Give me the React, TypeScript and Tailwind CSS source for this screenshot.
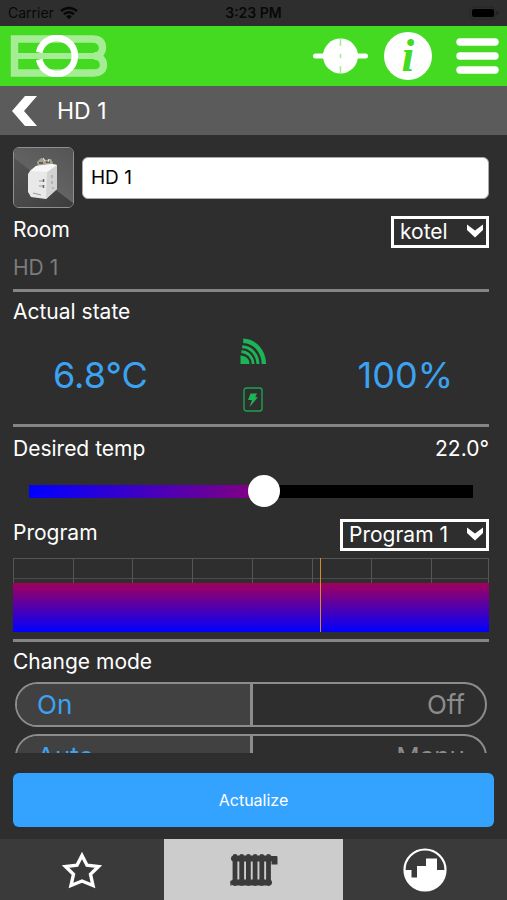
import { useState } from "react"
import type { ReactNode } from "react"

function WifiIcon() {
  return (
    <svg width="18" height="14" viewBox="0 0 18 14" fill="none" stroke="#080808" strokeWidth="2.4">
      <path d="M1 5.2A11.5 11.5 0 0 1 17 5.2" />
      <path d="M4 8.3A7.2 7.2 0 0 1 14 8.3" />
      <path d="M9 13.2L6.2 10.4a4 4 0 0 1 5.6 0Z" fill="#080808" stroke="none" />
    </svg>
  )
}

function BatteryIcon() {
  return (
    <svg width="30" height="14" viewBox="0 0 30 14">
      <rect x="1" y="1" width="25" height="12" rx="3.5" fill="none" stroke="#262626" />
      <rect x="3" y="3" width="22" height="8" rx="2" fill="#000" />
      <path d="M27.5 5v4a2 2 0 0 0 0-4Z" fill="#1d1d1d" />
    </svg>
  )
}

function Logo() {
  return (
    <svg width="98" height="42" viewBox="0 0 98 42" fill="none" aria-label="EOB" role="img">
      <g opacity=".52" stroke="#fff">
        <path
          d="M82 4H4.5V38H84C91 38 93.5 34 93.5 30C93.5 25 90 21 84 21C90 21 92.5 17 92.5 13C92.5 7 89 4 82 4Z"
          strokeWidth="7.4"
        />
        <path d="M8 21H84" strokeWidth="6" />
      </g>
      <path d="M29.2 17.5A18 18 0 1 1 29.2 24.5" stroke="#fff" strokeWidth="6.6" />
    </svg>
  )
}

function ConnectionIcon() {
  return (
    <svg width="55" height="36" viewBox="0 0 55 36">
      <path d="M2.5 18H52.5" stroke="#fff" strokeWidth="5" strokeLinecap="round" />
      <circle cx="27.5" cy="18" r="17.5" fill="#fff" />
      <path d="M27.5 1v7M27.5 16v4M27.5 28v7" stroke="#43da21" strokeWidth="1.5" opacity=".5" />
    </svg>
  )
}

function MenuIcon() {
  return (
    <svg width="43" height="36" viewBox="0 0 43 36" stroke="#fff" strokeWidth="7.4" strokeLinecap="round">
      <path d="M4 4H39M4 18H39M4 32H39" />
    </svg>
  )
}

function ValveIcon() {
  return (
    <svg width="59" height="59" viewBox="0 0 59 59">
      <defs>
        <linearGradient id="tile" x1="0" y1="0" x2="1" y2="1">
          <stop offset="0" stopColor="#555" />
          <stop offset=".5" stopColor="#4a4a4a" />
          <stop offset="1" stopColor="#3c3c3c" />
        </linearGradient>
        <linearGradient id="shine" x1="0" y1="0" x2="0" y2="1">
          <stop offset="0" stopColor="#fff" stopOpacity=".06" />
          <stop offset="1" stopColor="#fff" stopOpacity=".2" />
        </linearGradient>
      </defs>
      <rect width="59" height="59" fill="url(#tile)" />
      <path d="M0 10L59 55V0H0Z" fill="url(#shine)" />
      <path d="M24 19L23 14L27 10L32 12L37 11L39 15L37 20Z" fill="#aaa393" />
      <path d="M25 15h4M32 14h4M28 18h7" stroke="#4d473e" strokeWidth="1.5" />
      <path d="M29 10l2 3M35 11l-1 3" stroke="#e4dfd2" strokeWidth="1.2" />
      <path d="M14 26L16 23L22 18L38 16L43 17V41L32 51L17 49L14 44Z" fill="#e9e9e9" />
      <path d="M33 24L43 17V41L32 51Z" fill="#d2d2d2" />
      <path d="M22 18L38 16L43 17L33 24L16 23Z" fill="#f7f7f7" />
      <path d="M25 33h5M25 38h5M19 45l8 2M38 27v3M38 33v3M39 39v2" stroke="#999" strokeWidth="1" />
      <path d="M29.5 31v3M29.5 37v3" stroke="#666" strokeWidth="1.5" />
    </svg>
  )
}

function SignalIcon() {
  return (
    <svg width="27" height="27" viewBox="0 0 27 27" fill="none" stroke="#1cb456">
      <path d="M.5 26V17.5C5.5 17.5 9.5 21 9.5 26Z" fill="#1cb456" stroke="none" />
      <path d="M1.4 13.6C7.8 13.8 12.8 19 13.2 26" strokeWidth="2.6" />
      <path d="M2.2 8.8C11.2 9 17.6 16.5 18 26" strokeWidth="3" />
      <path d="M3.2 2.8C15 3.4 23.6 13 23.9 26" strokeWidth="4.4" />
    </svg>
  )
}

function PowerIcon() {
  return (
    <svg width="20" height="25" viewBox="0 0 20 25">
      <rect x="1" y="1" width="18" height="23" rx="2.5" fill="none" stroke="#1ba450" strokeWidth="1.4" />
      <path d="M7.5 6.5H14L12.3 10.2H15L6.5 20L9 13H5Z" fill="#1cb456" />
    </svg>
  )
}

function StarIcon() {
  return (
    <svg width="40" height="38" viewBox="0 0 40 38">
      <path
        d="M20 4.5L25 14.2L36.5 15.5L28.5 23.3L31 34.5L20 30L9 34.5L11.5 23.3L3.5 15.5L15 14.2Z"
        fill="none"
        stroke="#fff"
        strokeWidth="3.4"
      />
    </svg>
  )
}

function RadiatorIcon() {
  const ribs = [7, 13.7, 20.4, 27.1, 33.8, 40.5]
  return (
    <svg width="50" height="34" viewBox="0 0 50 34" fill="none" stroke="#3a3a3a">
      {ribs.map((x) => (
        <path key={x} d={`M${x} 3.5V30.5`} strokeWidth="4.8" strokeLinecap="round" />
      ))}
      <path d="M6 5.5H42M6 29.5H41" strokeWidth="6" strokeLinecap="round" />
      <path d="M42 5H49" strokeWidth="4" />
      <path d="M43.5 3.5h6v8h-6Z" fill="#3a3a3a" stroke="none" />
      <path d="M6 28.5H3V32.5" strokeWidth="1.4" />
    </svg>
  )
}

function StairsIcon() {
  return (
    <svg width="44" height="44" viewBox="0 0 44 44">
      <circle cx="22" cy="22" r="20.5" fill="none" stroke="#fff" strokeWidth="2.2" />
      <path d="M1.5 22H8.5V29.5H14V18H23V10.5H34V22H42.5A20.5 20.5 0 0 1 1.5 22Z" fill="#fff" />
    </svg>
  )
}

function Select({ id, options }: { id: string; options: string[] }) {
  return (
    <div className="relative">
      <select
        id={id}
        className="block h-8 appearance-none border-3 border-white bg-[#2e2e2e] pl-1.5 pr-[38px] text-[21px] leading-6 text-white"
      >
        {options.map((option) => (
          <option key={option}>{option}</option>
        ))}
      </select>
      <svg
        className="pointer-events-none absolute right-1.5 top-2"
        width="16"
        height="14"
        viewBox="0 0 16 14"
        fill="#fff"
      >
        <path d="M0 0.5L8 6.5L16 0.5V6L8 13.5L0 6Z" />
      </svg>
    </div>
  )
}

function Section({ children }: { children: ReactNode }) {
  return <section className="border-b-3 border-[#858585]">{children}</section>
}

function ModeSwitch({ name, options }: { name: string; options: [string, string] }) {
  const [value, setValue] = useState(options[0])
  return (
    <div
      role="radiogroup"
      aria-label={name}
      className="mx-0.5 grid h-[45px] shrink-0 grid-cols-[59fr_58fr] overflow-hidden rounded-full border-2 border-[#8c8c8c] text-[26px]"
    >
      {options.map((option) => (
        <label
          key={option}
          className="flex items-center px-5 text-[#8c8c8c] first:border-r-3 first:border-[#8c8c8c] last:justify-end has-checked:bg-[#414141] has-checked:text-[#3ba3f2]"
        >
          <input
            type="radio"
            name={name}
            className="sr-only"
            checked={value === option}
            onChange={() => setValue(option)}
          />
          {option}
        </label>
      ))}
    </div>
  )
}

const MIN_TEMP = 5
const MAX_TEMP = 37

export default function App() {
  const [temp, setTemp] = useState(22)
  const [name, setName] = useState("HD 1")
  const fill = ((temp - MIN_TEMP) / (MAX_TEMP - MIN_TEMP)) * 100

  return (
    <div className="flex h-screen flex-col bg-[#2e2e2e] font-['Inter','Liberation_Sans',sans-serif] text-[21px] leading-7 text-white">
      <div className="grid h-[26px] shrink-0 grid-cols-3 items-center px-2 text-[14px] leading-5 text-[#080808]">
        <div className="flex items-center gap-1.5">
          Carrier <WifiIcon />
        </div>
        <div className="text-center font-semibold">3:23 PM</div>
        <div className="flex justify-end">
          <BatteryIcon />
        </div>
      </div>

      <header className="flex h-15 shrink-0 items-center justify-between bg-[#43da21] pl-2.5 pr-2">
        <Logo />
        <div className="flex items-center">
          <button aria-label="Connection" className="mr-4">
            <ConnectionIcon />
          </button>
          <button
            aria-label="Info"
            className="mr-6 flex size-12 items-center justify-center rounded-full bg-white font-['Liberation_Serif',serif] text-[46px] font-bold italic leading-12 text-[#43da21]"
          >
            i
          </button>
          <button aria-label="Menu">
            <MenuIcon />
          </button>
        </div>
      </header>

      <div className="flex h-[49px] shrink-0 items-center gap-5 bg-[#5b5b5b] pl-3">
        <button aria-label="Back">
          <svg width="25" height="30" viewBox="0 0 25 30" fill="#fff">
            <path d="M0 15L13 0H25L12 15L25 30H13Z" />
          </svg>
        </button>
        <h1 className="text-[23px]">{name}</h1>
      </div>

      <main className="min-h-0 flex-1 overflow-y-auto pl-[13px] pr-[18px] pt-3 [scrollbar-width:none]">
        <Section>
          <div className="flex items-center gap-2">
            <div className="shrink-0 overflow-hidden rounded-md border border-[#8f8f8f]">
              <ValveIcon />
            </div>
            <input
              type="text"
              aria-label="Name"
              value={name}
              onChange={(e) => setName(e.target.value)}
              className="h-[42px] min-w-0 flex-1 rounded-md border border-[#aaa] bg-white px-2 text-[19px] text-black"
            />
          </div>
          <div className="mt-2 flex items-start justify-between">
            <label htmlFor="room">Room</label>
            <Select id="room" options={["kotel"]} />
          </div>
          <p className="mt-1.5 pb-[7px] text-[#7c7c7c]">HD 1</p>
        </Section>

        <Section>
          <h2 className="pt-1.5">Actual state</h2>
          <div className="flex items-center justify-between pb-3 pl-10 pr-9 pt-3 text-[36px] text-[#3ba3f2]">
            <span className="flex-1">6.8°C</span>
            <div className="flex flex-col items-center gap-[22px]">
              <SignalIcon />
              <PowerIcon />
            </div>
            <span className="flex-1 text-right">100%</span>
          </div>
        </Section>

        <div className="flex justify-between pt-2">
          <label htmlFor="temp">Desired temp</label>
          <output htmlFor="temp">{temp.toFixed(1)}°</output>
        </div>
        <div className="px-4 py-3">
          <input
            id="temp"
            type="range"
            min={MIN_TEMP}
            max={MAX_TEMP}
            step={0.5}
            value={temp}
            onChange={(e) => setTemp(Number(e.target.value))}
            style={{
              backgroundImage: `linear-gradient(to right, #0000ff, #87007d ${fill}%, #000 ${fill}%)`,
            }}
            className="block h-8 w-full appearance-none bg-[length:100%_13px] bg-center bg-no-repeat [&::-webkit-slider-thumb]:size-8 [&::-webkit-slider-thumb]:appearance-none [&::-webkit-slider-thumb]:rounded-full [&::-webkit-slider-thumb]:bg-white"
          />
        </div>

        <Section>
          <div className="flex items-start justify-between">
            <label htmlFor="program">Program</label>
            <Select id="program" options={["Program 1"]} />
          </div>
          <div className="relative mb-[7px] mt-[7px]">
            <div className="grid h-[25px] grid-cols-[repeat(7,21fr)_20fr] border-r border-t border-[#555]">
              {Array.from({ length: 8 }, (_, i) => (
                <div key={i} className="border-l border-[#555]">
                  <div className="h-5 border-b border-[#4c4c48]" />
                </div>
              ))}
            </div>
            <div className="h-[49px] bg-[linear-gradient(#a3005c,#0000ff)]" />
            <div className="absolute inset-y-0 left-[64.6%] w-px bg-[#d58a2c]" />
          </div>
        </Section>

        <h2 className="pb-1.5 pt-1.5">Change mode</h2>
        <div className="flex flex-col gap-[7px]">
          <ModeSwitch name="power" options={["On", "Off"]} />
          <ModeSwitch name="control" options={["Auto", "Manu"]} />
        </div>
      </main>

      <div className="shrink-0 px-[13px] pb-3 pt-5">
        <button className="h-[54px] w-full rounded-md bg-[#33a3ff] text-[16px]">Actualize</button>
      </div>

      <nav className="grid h-[61px] shrink-0 grid-cols-[12fr_13fr_12fr] bg-[#3a3a3a]">
        <button aria-label="Favourites" className="flex items-center justify-center">
          <StarIcon />
        </button>
        <button aria-label="Heating" className="flex items-center justify-center bg-[#ccc]">
          <RadiatorIcon />
        </button>
        <button aria-label="Floors" className="flex items-center justify-center">
          <StairsIcon />
        </button>
      </nav>
    </div>
  )
}
